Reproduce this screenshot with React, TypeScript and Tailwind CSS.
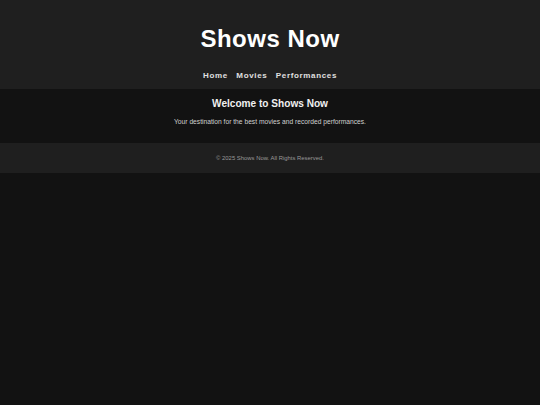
export default function App() {
  return (
    <div className="min-h-screen bg-[#121212] font-['Liberation_Sans',Arial,sans-serif]">
      <header className="bg-[#1f1f1f] h-[89px] pt-[25px] text-center">
        <h1 className="text-[24px] leading-[28px] font-bold text-white tracking-[0.5px]">Shows Now</h1>
        <nav className="mt-[18px] flex justify-center gap-[8.5px] text-[8px] leading-[10px] font-bold tracking-[0.65px] text-[#e0e0e0]">
          <a href="#">Home</a>
          <a href="#">Movies</a>
          <a href="#">Performances</a>
        </nav>
      </header>

      <main className="h-[54px] pt-[9px] text-center">
        <h2 className="text-[10.1px] leading-[12px] font-bold text-[#f0f0f0]">Welcome to Shows Now</h2>
        <p className="mt-[8px] text-[6.7px] leading-[8px] text-[#d0d0d0]">
          Your destination for the best movies and recorded performances.
        </p>
      </main>

      <footer className="bg-[#1f1f1f] h-[30px] flex items-center justify-center">
        <p className="text-[5.9px] text-[#999]">© 2025 Shows Now. All Rights Reserved.</p>
      </footer>
    </div>
  );
}
